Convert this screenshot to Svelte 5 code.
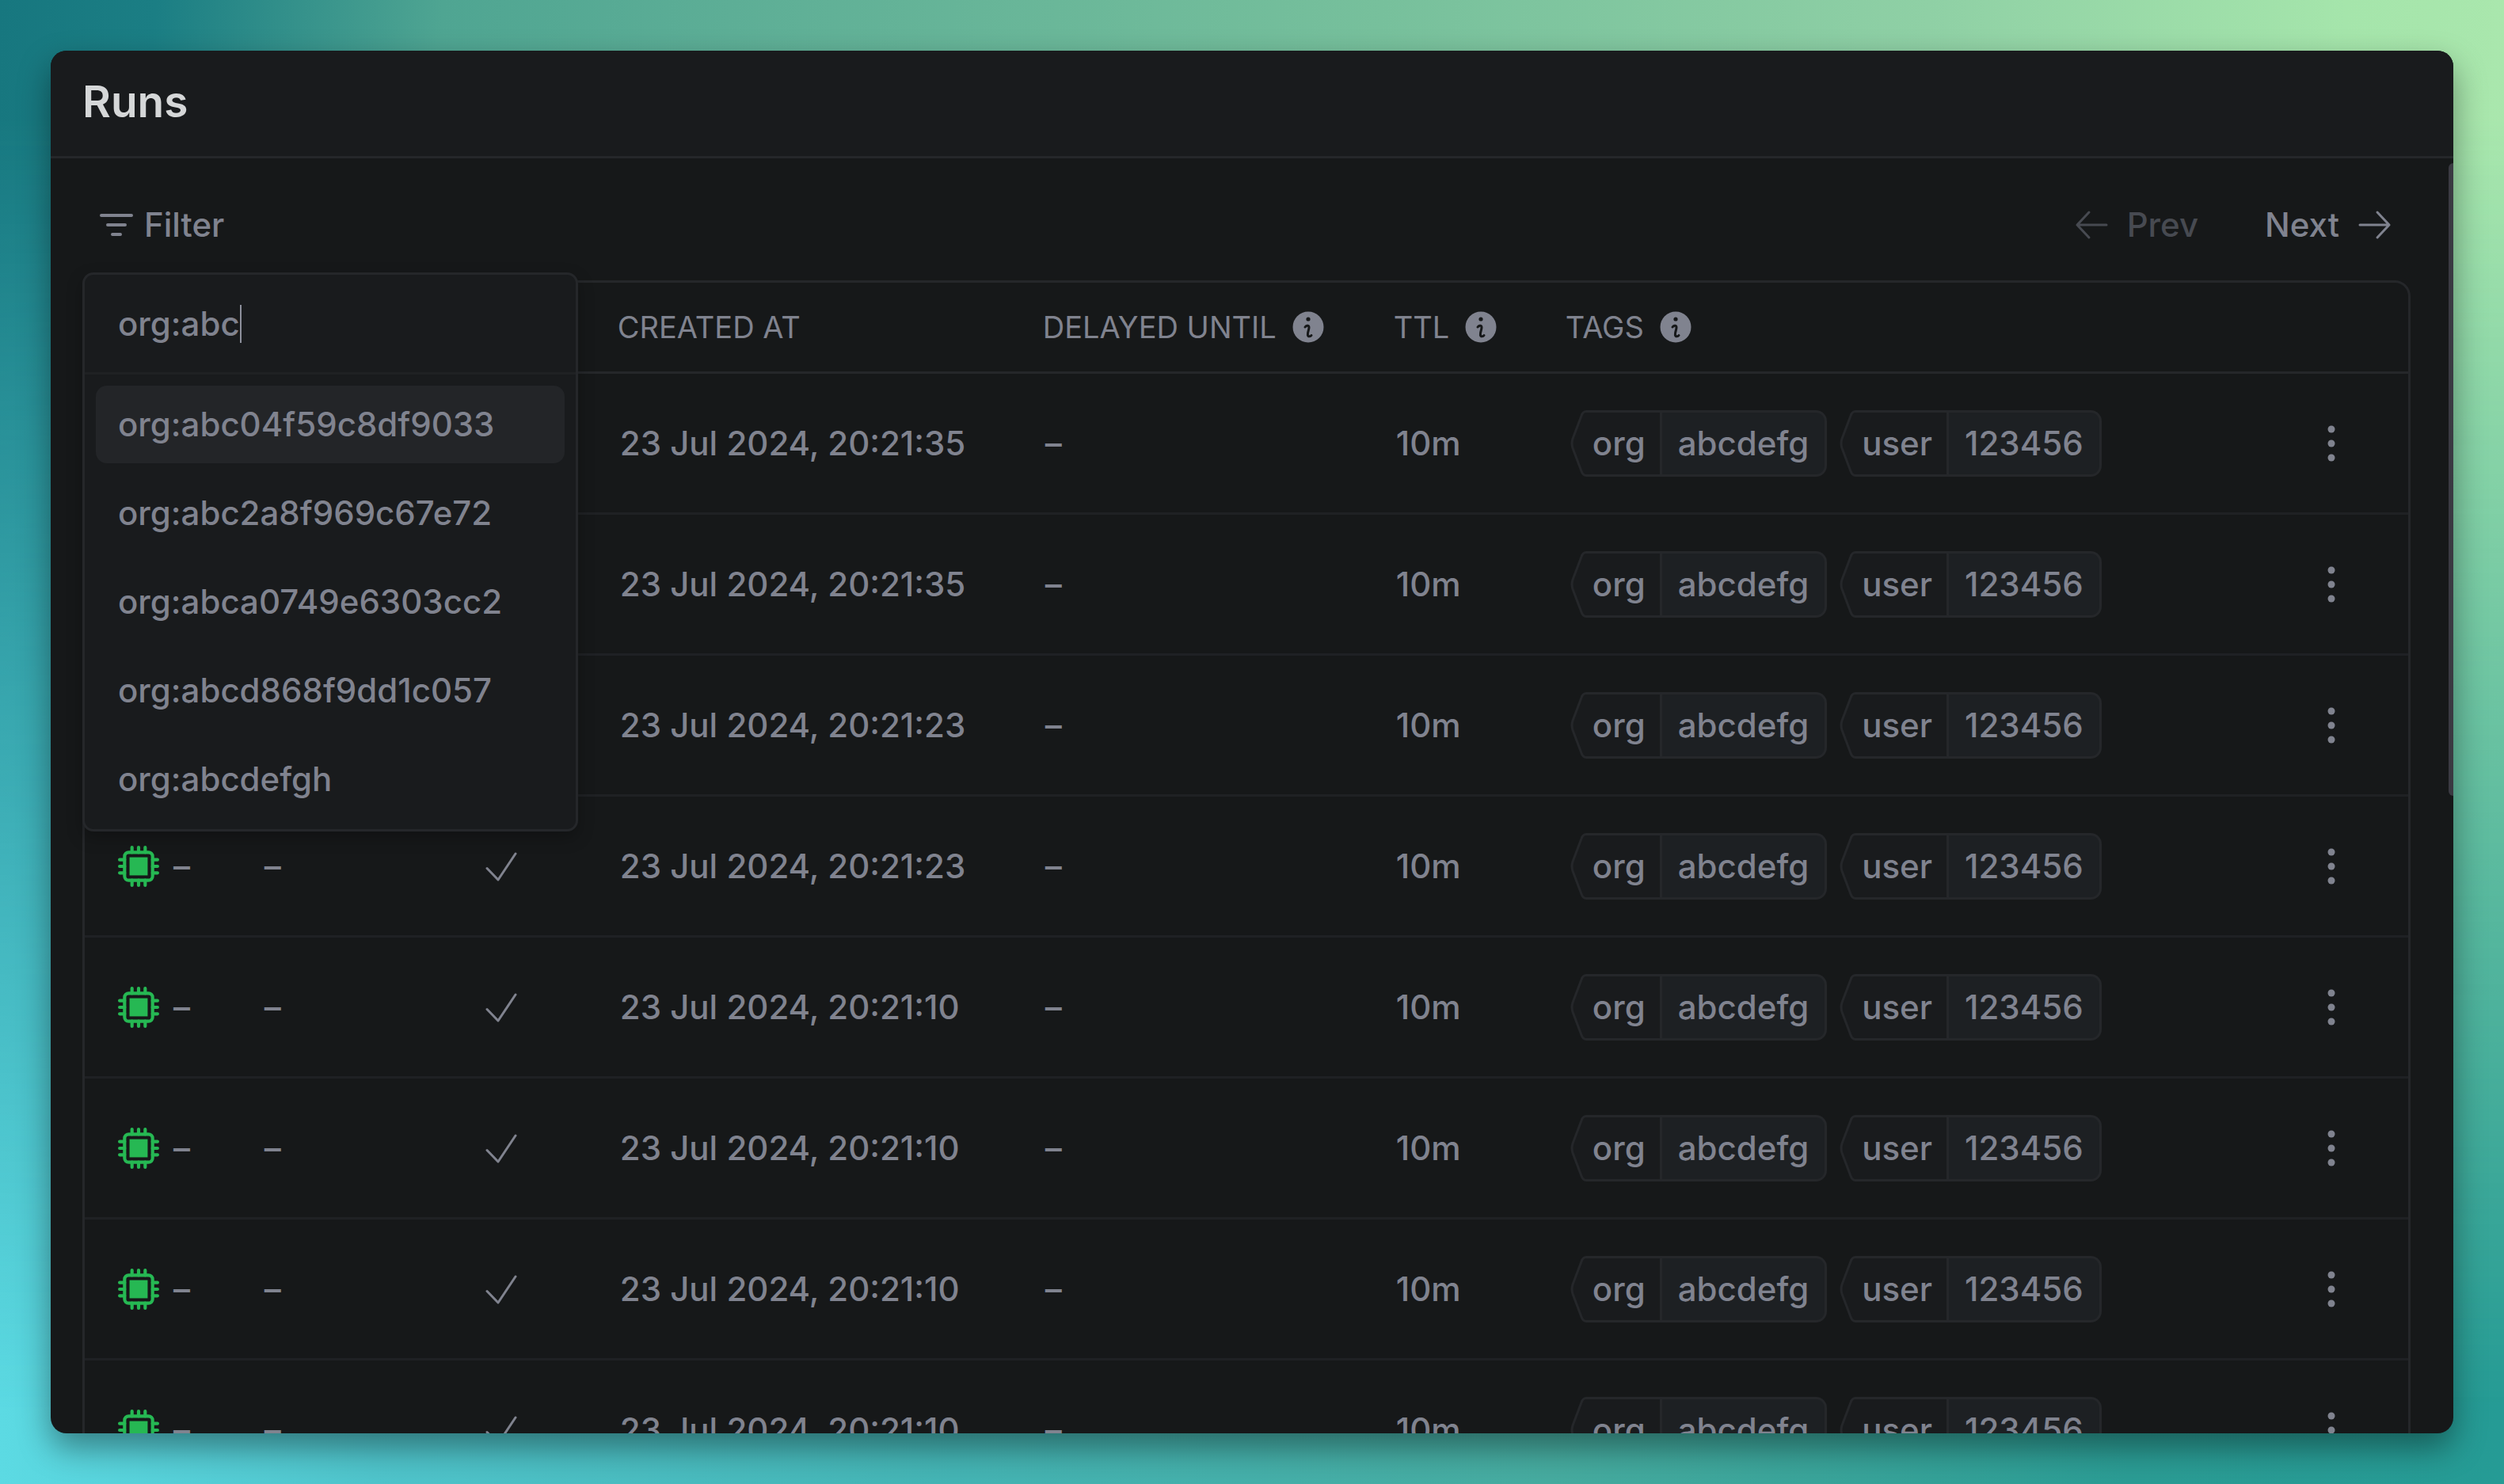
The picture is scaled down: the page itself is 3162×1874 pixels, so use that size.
<script>
    let query = $state('org:abc');
    let selected = $state(0);

    const suggestions = [
        'org:abc04f59c8df9033',
        'org:abc2a8f969c67e72',
        'org:abca0749e6303cc2',
        'org:abcd868f9dd1c057',
        'org:abcdefgh'
    ];

    const times = ['20:21:35', '20:21:35', '20:21:23', '20:21:23', '20:21:10', '20:21:10', '20:21:10', '20:21:10'];

    const runs = times.map((time, id) => ({
        id,
        createdAt: `23 Jul 2024, ${time}`,
        ttl: '10m',
        tags: [
            { key: 'org', value: 'abcdefg' },
            { key: 'user', value: '123456' }
        ]
    }));
</script>

{#snippet info()}
    <svg class="info" viewBox="0 0 40 40" aria-hidden="true">
        <circle cx="20" cy="20" r="19.5" fill="currentColor" />
        <circle cx="20" cy="10" r="2.6" fill="#161819" />
        <path d="M16 20c1-1.500 5-3.500 5 .5 0 3-2 6-1.600 9.500.3 2.500 3.600 2 4.600.5" fill="none" stroke="#161819" stroke-width="3" stroke-linecap="round" />
    </svg>
{/snippet}

<div class="desktop">
    <main class="window">
        <header>
            <h1>Runs</h1>
        </header>

        <div class="content">
            <div class="toolbar">
                <div class="filter">
                    <button class="filter-btn">
                        <svg class="filter-icon" viewBox="0 0 42 34" aria-hidden="true">
                            <path d="M2 5h38M10 17h22M16 29h10" fill="none" stroke="currentColor" stroke-width="4" stroke-linecap="round" />
                        </svg>
                        Filter
                    </button>
                    <div class="popover">
                        <label class="search">
                            <input type="text" bind:value={query} aria-label="Filter runs" />
                            <span class="caret"></span>
                        </label>
                        <ul>
                            {#each suggestions as item, i}
                                <li>
                                    <button class:selected={selected === i} onclick={() => (selected = i)}>{item}</button>
                                </li>
                            {/each}
                        </ul>
                    </div>
                </div>
                <nav class="pager">
                    <button disabled>
                        <svg class="arrow" viewBox="0 0 42 38" aria-hidden="true">
                            <path d="M40 19H3M18 3L3 19l15 16" fill="none" stroke="currentColor" stroke-width="3" stroke-linecap="round" stroke-linejoin="round" />
                        </svg>
                        Prev
                    </button>
                    <button>
                        Next
                        <svg class="arrow" viewBox="0 0 42 38" aria-hidden="true">
                            <path d="M2 19h37M24 3l15 16-15 16" fill="none" stroke="currentColor" stroke-width="3" stroke-linecap="round" stroke-linejoin="round" />
                        </svg>
                    </button>
                </nav>
            </div>

            <div class="table-wrap">
                <table>
                    <colgroup>
                        <col class="c-task" />
                        <col class="c-version" />
                        <col class="c-test" />
                        <col class="c-created" />
                        <col class="c-delayed" />
                        <col class="c-ttl" />
                        <col class="c-tags" />
                        <col class="c-menu" />
                    </colgroup>
                    <thead>
                        <tr>
                            <th></th>
                            <th></th>
                            <th></th>
                            <th>CREATED AT</th>
                            <th><span class="with-info">DELAYED UNTIL {@render info()}</span></th>
                            <th><span class="with-info">TTL {@render info()}</span></th>
                            <th><span class="with-info">TAGS {@render info()}</span></th>
                            <th></th>
                        </tr>
                    </thead>
                    <tbody>
                        {#each runs as run (run.id)}
                            <tr>
                                <td>
                                    <span class="task">
                                        <svg class="chip" viewBox="0 0 50 50" aria-hidden="true">
                                            <path d="M17 2v6M25 2v6M33 2v6M17 42v6M25 42v6M33 42v6M2 17h6M2 25h6M2 33h6M42 17h6M42 25h6M42 33h6" fill="none" stroke="currentColor" stroke-width="4" stroke-linecap="round" />
                                            <rect x="8" y="8" width="34" height="34" rx="5" fill="none" stroke="currentColor" stroke-width="4" />
                                            <rect x="14" y="14" width="22" height="22" fill="currentColor" />
                                        </svg>
                                        –
                                    </span>
                                </td>
                                <td>–</td>
                                <td>
                                    <svg class="check" viewBox="0 0 40 38" aria-hidden="true">
                                        <path d="M2 21.500L16 36 38 3" fill="none" stroke="currentColor" stroke-width="3" stroke-linecap="round" stroke-linejoin="round" />
                                    </svg>
                                </td>
                                <td class="value">{run.createdAt}</td>
                                <td class="value">–</td>
                                <td class="value">{run.ttl}</td>
                                <td>
                                    <div class="tags">
                                        {#each run.tags as tag}
                                            <span class="tag">
                                                <svg class="tag-tip" viewBox="0 0 20 84" aria-hidden="true">
                                                    <path d="M20 1.500C16 1.500 15 4 14 7L3 36q-2 6 0 12l11 29c1 3 2 5.500 6 5.500" fill="#191b1d" stroke="#25272a" stroke-width="3" />
                                                </svg>
                                                <span class="tag-key">{tag.key}</span>
                                                <span class="tag-value">{tag.value}</span>
                                            </span>
                                        {/each}
                                    </div>
                                </td>
                                <td>
                                    <button class="menu" aria-label="Run actions">
                                        <svg viewBox="0 0 10 46" aria-hidden="true">
                                            <circle cx="5" cy="5" r="4.500" fill="currentColor" />
                                            <circle cx="5" cy="23" r="4.500" fill="currentColor" />
                                            <circle cx="5" cy="41" r="4.500" fill="currentColor" />
                                        </svg>
                                    </button>
                                </td>
                            </tr>
                        {/each}
                    </tbody>
                </table>
            </div>
            <span class="scroll-thumb"></span>
        </div>
    </main>
</div>

<style>
    :global(body) { margin: 0; }

    .desktop {
        --text: #80838f;
        --line: #25272a;
        position: relative;
        box-sizing: border-box;
        height: 100vh;
        padding: 64px;
        overflow: hidden;
        font-family: Inter, "Liberation Sans", sans-serif;
        font-size: 42px;
        font-weight: 450;
        line-height: 56px;
        color: var(--text);
        background: linear-gradient(90deg, #5cdae3 0%, #4fc4cb 15%, #44b4b4 38%, #46ab9f 62%, #2b9c94 85%, #259b95 100%);
    }
    /* upper half of the wallpaper, fading into the lower one */
    .desktop::before {
        content: '';
        position: absolute;
        inset: 0;
        background: linear-gradient(94deg, #17777f 0%, #1b7e84 6%, #4fa592 17%, #5dae96 28%, #77c09c 53%, #8fd0a5 74%, #a5e5ab 90%, #ace8ae 100%);
        mask-image: linear-gradient(180deg, #000 8%, rgba(0, 0, 0, 0.5) 50%, transparent 95%);
    }
    button {
        font: inherit;
        color: inherit;
        background: none;
        border: none;
        padding: 0;
        cursor: pointer;
    }
    svg { display: block; flex: none; }

    .window {
        position: relative;
        display: flex;
        flex-direction: column;
        height: 100%;
        border-radius: 20px;
        overflow: hidden;
        background: #161819;
        box-shadow: 0 18px 40px rgba(0, 0, 0, 0.4);
    }
    header {
        padding: 32px 40px 37px;
        background: #191b1d;
        border-bottom: 3px solid var(--line);
    }
    h1 {
        margin: 0;
        font-size: 55px;
        line-height: 64px;
        font-weight: 600;
        color: #d5d7d8;
    }

    .content {
        position: relative;
        flex: 1;
        min-height: 0;
        padding: 40px 54px 0 40px;
    }
    .toolbar {
        display: flex;
        justify-content: space-between;
        align-items: center;
        height: 88px;
        margin-bottom: 26px;
    }
    .filter { position: relative; }
    .filter-btn {
        display: flex;
        align-items: center;
        gap: 14px;
        height: 88px;
        padding: 0 22px;
    }
    .filter-icon { width: 42px; height: 34px; }
    .pager {
        display: flex;
        gap: 84px;
        padding-right: 24px;
    }
    .pager button {
        display: flex;
        align-items: center;
        gap: 24px;
    }
    .pager button:disabled { color: #474a51; }
    .arrow { width: 42px; height: 38px; }

    .popover {
        position: absolute;
        top: 104px;
        left: 0;
        z-index: 2;
        box-sizing: border-box;
        width: 626px;
        background: #191b1d;
        border: 3px solid var(--line);
        border-radius: 14px;
        box-shadow: 0 8px 20px rgba(0, 0, 0, 0.25);
    }
    .search {
        display: flex;
        align-items: center;
        height: 123px;
        padding: 0 42px;
        border-bottom: 3px solid #1f2123;
    }
    .search input {
        field-sizing: content;
        padding: 0;
        font: inherit;
        color: inherit;
        background: none;
        border: none;
        outline: none;
        caret-color: transparent;
    }
    .caret { width: 2px; height: 48px; background: #8d909c; }
    ul {
        display: flex;
        flex-direction: column;
        gap: 14px;
        margin: 0;
        padding: 14px;
        list-style: none;
    }
    li button {
        display: block;
        width: 100%;
        height: 98px;
        padding: 0 28px;
        border-radius: 14px;
        text-align: left;
    }
    li button.selected { background: #232528; }

    .table-wrap {
        border: 3px solid var(--line);
        border-radius: 20px;
    }
    table {
        width: 100%;
        table-layout: fixed;
        border-collapse: separate;
        border-spacing: 0;
    }
    .c-task { width: 6.3%; }
    .c-version { width: 9.5%; }
    .c-test { width: 5.7%; }
    .c-created { width: 18.3%; }
    .c-delayed { width: 15.1%; }
    .c-ttl { width: 7.4%; }
    th, td {
        box-sizing: border-box;
        padding: 0 0 0 42px;
        text-align: left;
        white-space: nowrap;
    }
    th {
        height: 115px;
        font-size: 38px;
        font-weight: 400;
        border-bottom: 3px solid var(--line);
    }
    td {
        height: 178px;
        border-bottom: 3px solid #1f2124;
    }
    td.value { padding-left: 45px; }
    .with-info {
        display: flex;
        align-items: center;
        gap: 20px;
    }
    .info { width: 40px; height: 40px; }
    .task {
        display: flex;
        align-items: center;
        gap: 18px;
    }
    .chip { width: 52px; height: 52px; color: #26b853; }
    .check { width: 40px; height: 38px; }

    .tags {
        display: flex;
        gap: 16px;
        padding-left: 6px;
    }
    .tag { display: flex; height: 84px; }
    .tag-tip { width: 20px; height: 84px; }
    .tag-key, .tag-value {
        display: flex;
        align-items: center;
        box-sizing: border-box;
        border: 3px solid var(--line);
    }
    .tag-key {
        padding: 0 18px 0 8px;
        background: #191b1d;
        border-left: none;
    }
    .tag-value {
        padding: 0 20px;
        background: #1d2023;
        border-left: none;
        border-radius: 0 14px 14px 0;
    }
    .menu {
        display: block;
        margin-left: auto;
        margin-right: 92px;
    }
    .menu svg { width: 10px; height: 46px; }

    .scroll-thumb {
        position: absolute;
        top: 6px;
        right: 0;
        width: 6px;
        height: 799px;
        border-radius: 6px 0 0 6px;
        background: #3a3a42;
    }
</style>
